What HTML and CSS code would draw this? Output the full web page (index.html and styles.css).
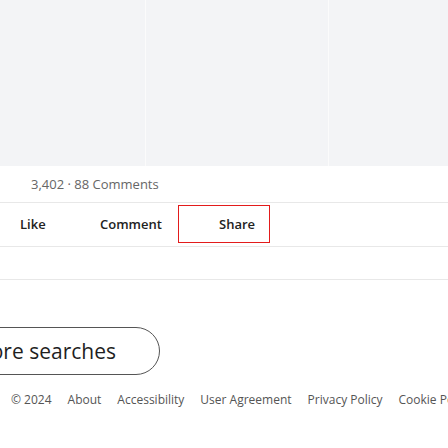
FILE: index.html
```html
<!DOCTYPE html>
<html lang="en">
<head>
<meta charset="utf-8">
<link rel="stylesheet" href="styles.css">
</head>
<body>
<div class="page">
  <div class="media">
    <div class="tile"></div>
    <div class="tile"></div>
    <div class="tile"></div>
  </div>
  <div class="stats">3,402 · 88 Comments</div>
  <div class="actions">
    <button class="act act-like">Like</button>
    <button class="act act-comment">Comment</button>
    <button class="act act-share act-focus">Share</button>
  </div>
  <div class="spacer"></div>
  <div class="more-wrap">
    <button class="more">Explore more searches</button>
  </div>
  <ul class="footer">
    <li>© 2024</li>
    <li>About</li>
    <li>Accessibility</li>
    <li>User Agreement</li>
    <li>Privacy Policy</li>
    <li>Cookie Policy</li>
  </ul>
</div>
</body>
</html>
```

FILE: styles.css
```css
html, body {
  margin: 0;
  padding: 0;
  background: #fff;
  overflow: hidden;
}
body {
  font-family: "Open Sans", "Noto Sans", sans-serif;
  color: #222;
  width: 448px;
  height: 448px;
}
.page {
  width: 448px;
}
.media {
  display: grid;
  grid-template-columns: 145px 182px 1fr;
  column-gap: 1px;
  height: 166px;
  background: #fbfbfb;
}
.tile {
  background: #f3f4f6;
}
.stats {
  padding: 8px 0 8px 31px;
  font-size: 13px;
  line-height: 20px;
  color: #666;
}
.actions {
  display: flex;
  margin-left: -21px;
  padding: 2px 0 3px;
  border-top: 1px solid #e8e8e8;
  border-bottom: 1px solid #e8e8e8;
}
.act {
  flex: none;
  height: 38px;
  padding: 0 0 0 40px;
  border: 1px solid transparent;
  background: none;
  font-family: inherit;
  font-size: 13px;
  font-weight: 600;
  color: #222;
  text-align: left;
}
.act-like { width: 80px; }
.act-comment { width: 119px; }
.act-share { width: 92px; }
.act-focus {
  border-color: #e31b1b;
}
.spacer {
  height: 32px;
  border-bottom: 1px solid #e8e8e8;
}
.more-wrap {
  margin-top: 47px;
  display: flex;
}
.more {
  margin-left: -133px;
  height: 48px;
  padding: 0 43px 0 24px;
  border: 1px solid #555;
  border-radius: 24px;
  background: #fff;
  font-family: inherit;
  font-size: 21px;
  color: #1f1f1f;
  white-space: nowrap;
}
.footer {
  display: flex;
  gap: 16px;
  margin: 16px 0 0;
  padding: 0 0 0 11px;
  list-style: none;
  font-size: 12px;
  line-height: 18px;
  color: #555;
  white-space: nowrap;
}
```
